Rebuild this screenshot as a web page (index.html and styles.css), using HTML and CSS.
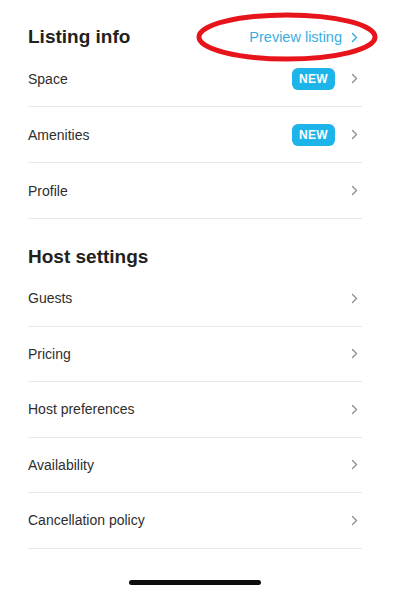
FILE: index.html
```html
<!DOCTYPE html>
<html>
<head>
<meta charset="utf-8">
<link rel="stylesheet" href="styles.css">
</head>
<body>
<div class="page">
  <section class="section">
    <div class="section-head first">
      <h2 class="title">Listing info</h2>
      <a class="preview">Preview listing
        <svg class="chev" width="7" height="11" viewBox="0 0 7 11"><path d="M1.5 1.5 L5.5 5.5 L1.5 9.5" fill="none" stroke="currentColor" stroke-width="1.5" stroke-linecap="round" stroke-linejoin="round"/></svg>
      </a>
      <svg class="circle" width="184" height="52" viewBox="0 0 184 52"><ellipse cx="92" cy="26" rx="88" ry="22" fill="none" stroke="#e8141b" stroke-width="5"/></svg>
    </div>
    <div class="row"><span class="label">Space</span><span class="right"><span class="badge">NEW</span><svg class="chev grey" width="7" height="11" viewBox="0 0 7 11"><path d="M1.5 1.5 L5.5 5.5 L1.5 9.5" fill="none" stroke="currentColor" stroke-width="1.3" stroke-linecap="round" stroke-linejoin="round"/></svg></span></div>
    <div class="row"><span class="label">Amenities</span><span class="right"><span class="badge">NEW</span><svg class="chev grey" width="7" height="11" viewBox="0 0 7 11"><path d="M1.5 1.5 L5.5 5.5 L1.5 9.5" fill="none" stroke="currentColor" stroke-width="1.3" stroke-linecap="round" stroke-linejoin="round"/></svg></span></div>
    <div class="row"><span class="label">Profile</span><span class="right"><svg class="chev grey" width="7" height="11" viewBox="0 0 7 11"><path d="M1.5 1.5 L5.5 5.5 L1.5 9.5" fill="none" stroke="currentColor" stroke-width="1.3" stroke-linecap="round" stroke-linejoin="round"/></svg></span></div>
  </section>
  <section class="section second-section">
    <div class="section-head second">
      <h2 class="title">Host settings</h2>
    </div>
    <div class="row"><span class="label">Guests</span><span class="right"><svg class="chev grey" width="7" height="11" viewBox="0 0 7 11"><path d="M1.5 1.5 L5.5 5.5 L1.5 9.5" fill="none" stroke="currentColor" stroke-width="1.3" stroke-linecap="round" stroke-linejoin="round"/></svg></span></div>
    <div class="row"><span class="label">Pricing</span><span class="right"><svg class="chev grey" width="7" height="11" viewBox="0 0 7 11"><path d="M1.5 1.5 L5.5 5.5 L1.5 9.5" fill="none" stroke="currentColor" stroke-width="1.3" stroke-linecap="round" stroke-linejoin="round"/></svg></span></div>
    <div class="row"><span class="label">Host preferences</span><span class="right"><svg class="chev grey" width="7" height="11" viewBox="0 0 7 11"><path d="M1.5 1.5 L5.5 5.5 L1.5 9.5" fill="none" stroke="currentColor" stroke-width="1.3" stroke-linecap="round" stroke-linejoin="round"/></svg></span></div>
    <div class="row"><span class="label">Availability</span><span class="right"><svg class="chev grey" width="7" height="11" viewBox="0 0 7 11"><path d="M1.5 1.5 L5.5 5.5 L1.5 9.5" fill="none" stroke="currentColor" stroke-width="1.3" stroke-linecap="round" stroke-linejoin="round"/></svg></span></div>
    <div class="row"><span class="label">Cancellation policy</span><span class="right"><svg class="chev grey" width="7" height="11" viewBox="0 0 7 11"><path d="M1.5 1.5 L5.5 5.5 L1.5 9.5" fill="none" stroke="currentColor" stroke-width="1.3" stroke-linecap="round" stroke-linejoin="round"/></svg></span></div>
  </section>
  <div class="home-bar"></div>
</div>
</body>
</html>
```
FILE: styles.css
```css
html, body {
  margin: 0;
  padding: 0;
  background: #fff;
}
body {
  font-family: "Liberation Sans", Arial, sans-serif;
  color: #2b2b2b;
  width: 402px;
  height: 598px;
  overflow: hidden;
}
.page {
  padding: 0 40px 0 28px;
  display: flex;
  flex-direction: column;
}
.section-head {
  position: relative;
  display: flex;
  align-items: center;
  justify-content: space-between;
  height: 28px;
}
.section-head.first { margin-top: 23px; }
.section-head.second { margin-top: 24px; }
.title {
  margin: 0;
  font-size: 19px;
  font-weight: 700;
  color: #1f221d;
}
.preview {
  display: flex;
  align-items: center;
  gap: 9px;
  color: #3aaee3;
  font-size: 14.5px;
  padding-right: 4px;
}
.circle {
  position: absolute;
  left: 167px;
  top: -12px;
}
.row {
  height: 55px;
  border-bottom: 1px solid #e8e8e8;
  display: flex;
  align-items: center;
  justify-content: space-between;
}
.second-section .row {
  height: 54.5px;
}
.label {
  font-size: 14px;
  color: #2e2e2e;
}
.right {
  display: flex;
  align-items: center;
  gap: 16px;
  padding-right: 4px;
}
.badge {
  background: #1db4ea;
  color: #fff;
  font-weight: 700;
  font-size: 12px;
  width: 43px;
  height: 22px;
  border-radius: 6px;
  display: flex;
  align-items: center;
  justify-content: center;
  letter-spacing: 0.3px;
}
.chev { display: block; }
.chev.grey { color: #8a8d93; }
.home-bar {
  margin: 31px auto 0;
  width: 132px;
  height: 5px;
  border-radius: 3px;
  background: #0d0d0d;
}
```
